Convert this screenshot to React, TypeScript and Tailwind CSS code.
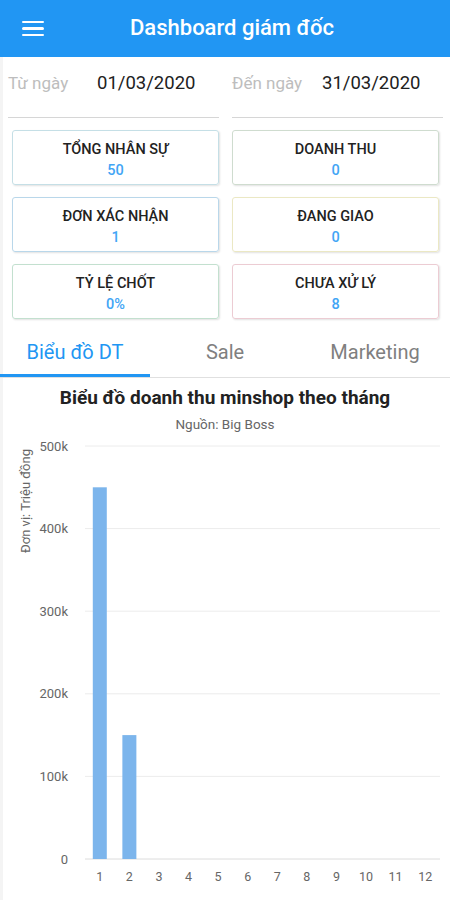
import React from "react";

const cards = [
  { label: "TỔNG NHÂN SỰ", value: "50", border: "border-[#c5dfe6]" },
  { label: "DOANH THU", value: "0", border: "border-[#cfdccf]" },
  { label: "ĐƠN XÁC NHẬN", value: "1", border: "border-[#b9d7ea]" },
  { label: "ĐANG GIAO", value: "0", border: "border-[#ebe8c4]" },
  { label: "TỶ LỆ CHỐT", value: "0%", border: "border-[#c3e0cf]" },
  { label: "CHƯA XỬ LÝ", value: "8", border: "border-[#ecccd3]" },
];

function Chart() {
  const base = 422;
  const step = 82.6;
  const left = 85;
  const right = 440;
  const cw = (right - left) / 12;
  const data = [450, 150, 0, 0, 0, 0, 0, 0, 0, 0, 0, 0];
  return (
    <svg width={450} height={464} className="block">
      {[0, 1, 2, 3, 4, 5].map((k) => (
        <g key={k}>
          <line
            x1={left}
            x2={right}
            y1={base - k * step}
            y2={base - k * step}
            stroke={k === 0 ? "#dcdcdc" : "#ececec"}
            strokeWidth={1}
          />
          <text
            x={68}
            y={base - k * step + 4.5}
            textAnchor="end"
            fontSize={13}
            fill="#666"
            fontFamily="Roboto, sans-serif"
          >
            {k === 0 ? "0" : `${k}00k`}
          </text>
        </g>
      ))}
      <text
        x={0}
        y={0}
        transform="translate(30,64) rotate(-90)"
        textAnchor="middle"
        fontSize={13}
        fill="#666"
        fontFamily="Roboto, sans-serif"
      >
        Đơn vị: Triệu đồng
      </text>
      {data.map((v, i) => {
        const cx = left + cw * i + cw / 2;
        const h = (v / 100) * step;
        return (
          <g key={i}>
            {v > 0 && (
              <rect x={cx - 7} y={base - h} width={14} height={h} fill="#7cb5ec" />
            )}
            <text
              x={cx}
              y={base + 22}
              textAnchor="middle"
              fontSize={12.5}
              fill="#666"
              fontFamily="Roboto, sans-serif"
            >
              {i + 1}
            </text>
          </g>
        );
      })}
    </svg>
  );
}

export default function App() {
  return (
    <div className="w-[450px] h-[900px] overflow-hidden bg-white font-['Roboto',sans-serif]">
      <div className="h-[57px] bg-[#2196f3] flex items-center">
        <div className="w-[66px] pl-[22px] flex flex-col gap-[4px]">
          <div className="w-[22px] h-[2.5px] bg-white rounded-sm" />
          <div className="w-[22px] h-[2.5px] bg-white rounded-sm" />
          <div className="w-[22px] h-[2.5px] bg-white rounded-sm" />
        </div>
        <div className="flex-1 pl-[64px] text-white text-[22px] font-medium leading-none pb-[2px]">
          Dashboard giám đốc
        </div>
      </div>
      <div className="border-l-[3px] border-[#f4f4f4]">
        <div className="flex gap-[13px] pl-[5px] pr-[7px]">
          <div className="w-[211px] h-[61px] pt-[14px] border-b border-[#d6d6d6] flex">
            <span className="w-[89px] text-[17px] leading-[24px] text-[#bdbdbd]">Từ ngày</span>
            <span className="text-[18.5px] leading-[24px] text-[#212121]">01/03/2020</span>
          </div>
          <div className="w-[211px] h-[61px] pt-[14px] border-b border-[#d6d6d6] flex">
            <span className="w-[90px] text-[17px] leading-[24px] text-[#bdbdbd]">Đến ngày</span>
            <span className="text-[18.5px] leading-[24px] text-[#212121]">31/03/2020</span>
          </div>
        </div>
        <div className="grid grid-cols-2 gap-x-[13px] gap-y-[12px] pl-[9px] pr-[11px] mt-[12px]">
          {cards.map((c) => (
            <div
              key={c.label}
              className={`h-[55px] border ${c.border} rounded-[3px] shadow-[1px_1px_2px_rgba(0,0,0,0.12)] pt-[9px] text-center`}
            >
              <div className="text-[14.5px] leading-[20px] font-medium text-[#222]">{c.label}</div>
              <div className="mt-[2px] text-[14.5px] leading-[18px] font-medium text-[#42a5f5]">{c.value}</div>
            </div>
          ))}
        </div>
        <div className="mt-[10px] flex border-b border-[#e0e0e0] -ml-[3px]">
          <div className="w-[150px] h-[48px] border-b-[3px] border-[#2196f3] flex items-center justify-center text-[20px] text-[#2196f3]">
            Biểu đồ DT
          </div>
          <div className="w-[150px] h-[48px] flex items-center justify-center text-[20px] text-[#808080] pb-[3px]">
            Sale
          </div>
          <div className="w-[150px] h-[48px] flex items-center justify-center text-[20px] text-[#808080] pb-[3px]">
            Marketing
          </div>
        </div>
        <div className="-ml-[3px]">
          <div className="mt-[8px] text-center text-[19px] leading-[24px] font-bold text-[#222]">
            Biểu đồ doanh thu minshop theo tháng
          </div>
          <div className="mt-[5px] text-center text-[13.5px] leading-[18px] text-[#666]">
            Nguồn: Big Boss
          </div>
          <div className="mt-[4px]">
            <Chart />
          </div>
        </div>
      </div>
    </div>
  );
}
